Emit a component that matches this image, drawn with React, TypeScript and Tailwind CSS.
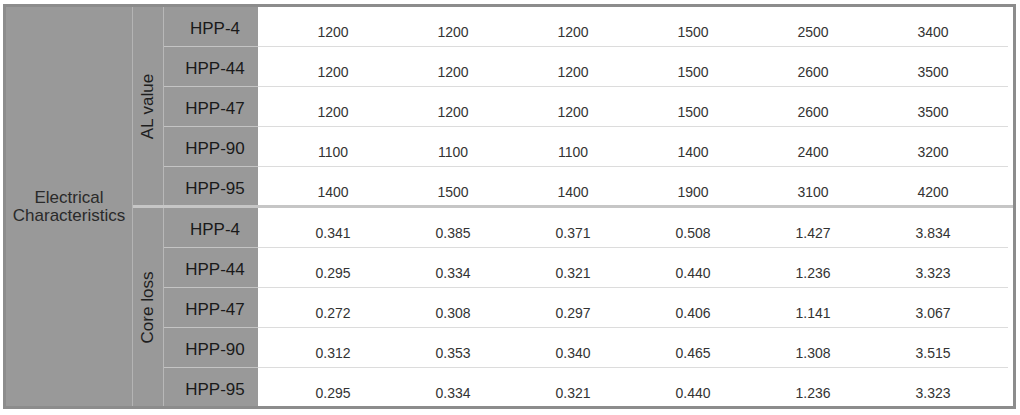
import React from "react";

const alRows = [
  { name: "HPP-4", v: ["1200", "1200", "1200", "1500", "2500", "3400"] },
  { name: "HPP-44", v: ["1200", "1200", "1200", "1500", "2600", "3500"] },
  { name: "HPP-47", v: ["1200", "1200", "1200", "1500", "2600", "3500"] },
  { name: "HPP-90", v: ["1100", "1100", "1100", "1400", "2400", "3200"] },
  { name: "HPP-95", v: ["1400", "1500", "1400", "1900", "3100", "4200"] },
];

const coreRows = [
  { name: "HPP-4", v: ["0.341", "0.385", "0.371", "0.508", "1.427", "3.834"] },
  { name: "HPP-44", v: ["0.295", "0.334", "0.321", "0.440", "1.236", "3.323"] },
  { name: "HPP-47", v: ["0.272", "0.308", "0.297", "0.406", "1.141", "3.067"] },
  { name: "HPP-90", v: ["0.312", "0.353", "0.340", "0.465", "1.308", "3.515"] },
  { name: "HPP-95", v: ["0.295", "0.334", "0.321", "0.440", "1.236", "3.323"] },
];

type Row = { name: string; v: string[] };

function Section({ label, rows }: { label: string; rows: Row[] }) {
  return (
    <div className="flex h-[198px]">
      <div className="w-[31px] border-r border-[#b8b8b8] bg-[#999999] flex items-center justify-center overflow-visible">
        <span className="-rotate-90 whitespace-nowrap text-[17px] leading-none text-[#1e1e1e]">
          {label}
        </span>
      </div>
      <div className="flex-1 flex flex-col">
        {rows.map((r, i) => {
          const last = i === rows.length - 1;
          return (
            <div key={r.name} className={last ? "flex flex-1" : "flex h-[40px]"}>
              <div
                className={
                  "w-[94px] bg-[#999999] flex items-center justify-center pt-[5px] pl-[8px] text-[17px] text-[#1a1a1a] " +
                  (last ? "" : "border-b border-[#c4c4c4]")
                }
              >
                {r.name}
              </div>
              <div
                className={
                  "flex-1 bg-white grid grid-cols-6 px-[15px] pt-[12px] items-center text-[14px] text-[#333333] " +
                  (last ? "" : "border-b border-[#dcdcdc]")
                }
              >
                {r.v.map((x, j) => (
                  <div key={j} className="text-center">
                    {x}
                  </div>
                ))}
              </div>
            </div>
          );
        })}
      </div>
      <div className="w-[5px] bg-white" />
    </div>
  );
}

export default function App() {
  return (
    <div
      className="w-[1020px] h-[415px] bg-white pt-[4px] pl-[3px]"
      style={{ fontFamily: "'Liberation Sans', Arial, Helvetica, sans-serif" }}
    >
      <div className="w-[1013px] border-[3px] border-[#8c8c8c] flex">
        <div className="w-[127px] border-r border-[#b4b4b4] bg-[#999999] flex items-center justify-center text-center text-[17px] leading-[18px] text-[#2a2a2a]">
          <div>
            Electrical
            <br />
            Characteristics
          </div>
        </div>
        <div className="flex-1 flex flex-col">
          <Section label="AL value" rows={alRows} />
          <div className="h-[3px] bg-[#c6c6c6]" />
          <Section label="Core loss" rows={coreRows} />
        </div>
      </div>
    </div>
  );
}
